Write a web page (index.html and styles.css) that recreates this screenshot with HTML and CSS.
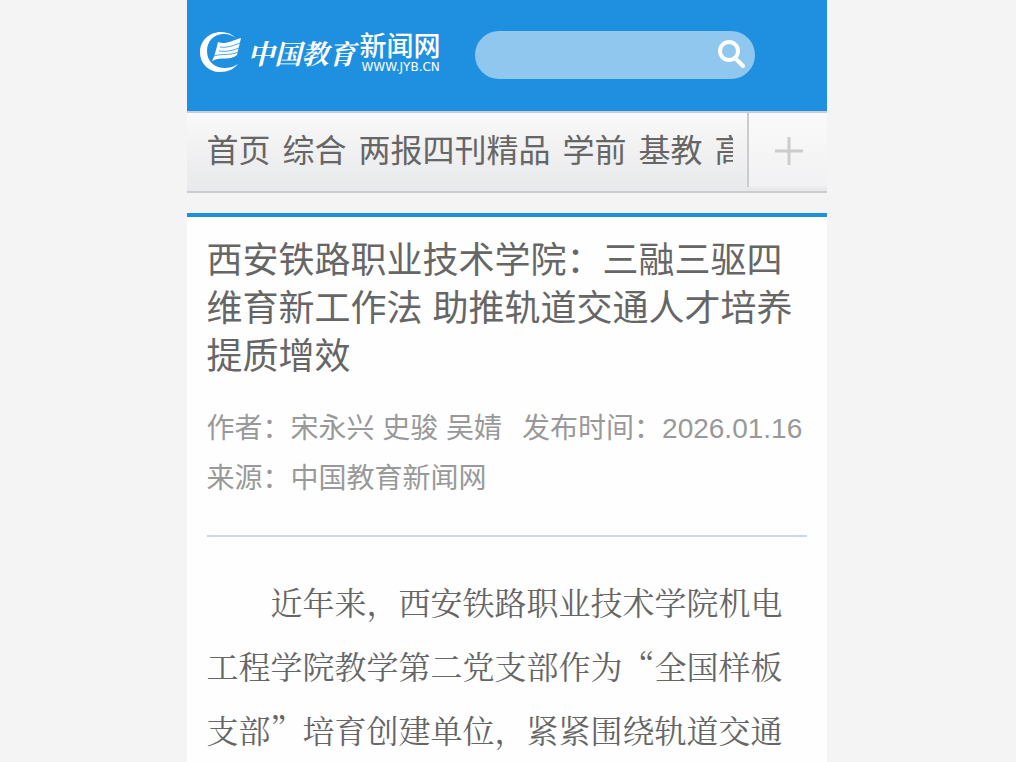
FILE: index.html
```html
<!DOCTYPE html>
<html lang="zh-CN">
<head>
  <meta charset="UTF-8">
  <meta name="viewport" content="width=device-width, initial-scale=1.0">
  <title>西安铁路职业技术学院：三融三驱四维育新工作法 助推轨道交通人才培养提质增效</title>
  <link rel="stylesheet" href="styles.css">
</head>
<body>
  <div class="wrap">
    <header class="header">
      <a class="logo" href="#">
        <svg class="logo-mark" viewBox="0 0 42 42" aria-hidden="true">
          <path d="M36 6C32 2 27 0 21 0C9 0 0 9 0 20C0 32 9 40 20 40C28 40 34 37 38 32C33 35 29 36 25 36C14 36 7 29 7 19C7 9 14 2 24 2C29 2 33 4 36 6Z"/>
          <path d="M18 10C25 13 31 9 41 6L37 23C30 29 22 24 12 29C15 23 16 18 18 10Z"/>
          <path class="logo-lines" d="M20 15C27 16 32 14 40 11M19 19C26 20 31 19 39 16M14 24C23 21 30 24 38 20"/>
        </svg>
        <span class="logo-brush">中国教育</span>
        <span class="logo-side">
          <span class="logo-name">新闻网</span>
          <span class="logo-url">WWW.JYB.CN</span>
        </span>
      </a>
      <form class="search">
        <input class="search-input" type="text" aria-label="搜索">
        <button class="search-btn" type="submit" aria-label="搜索">
          <svg viewBox="0 0 30 30" aria-hidden="true">
            <circle cx="12" cy="11" r="9"/>
            <path d="M18 18L26 26"/>
          </svg>
        </button>
      </form>
    </header>

    <nav class="nav">
      <div class="nav-list">
        <a href="#">首页</a>
        <a href="#">综合</a>
        <a href="#">两报四刊精品</a>
        <a href="#">学前</a>
        <a href="#">基教</a>
        <a href="#">高教</a>
      </div>
      <button class="nav-more" type="button" aria-label="更多">
        <svg viewBox="0 0 28 28" aria-hidden="true">
          <path d="M14 0V28M0 14H28"/>
        </svg>
      </button>
    </nav>

    <main class="article">
      <h1>西安铁路职业技术学院：三融三驱四维育新工作法 助推轨道交通人才培养提质增效</h1>
      <div class="meta">
        <span>作者：宋永兴 史骏 吴婧</span>
        <span>发布时间：2026.01.16</span>
        <span>来源：中国教育新闻网</span>
      </div>
      <div class="content">
        <p>近年来，西安铁路职业技术学院机电工程学院教学第二党支部作为“全国样板支部”培育创建单位，紧紧围绕轨道交通</p>
      </div>
    </main>
  </div>
</body>
</html>
```
FILE: styles.css
```css
* {
  box-sizing: border-box;
}

body {
  margin: 0;
  padding-right: 3px;
  background: #f4f4f4;
  color: #666;
  font-family: "Liberation Sans", "Noto Sans CJK SC", sans-serif;
}

a {
  color: inherit;
  text-decoration: none;
}

button {
  padding: 0;
  border: none;
  background: none;
  cursor: pointer;
}

.wrap {
  display: flex;
  flex-direction: column;
  max-width: 640px;
  min-height: 100vh;
  margin: 0 auto;
}

.header {
  display: flex;
  align-items: center;
  gap: 34px;
  padding: 26px 72px 32px 13px;
  background: #1f8fe0;
}

.logo {
  display: flex;
  align-items: center;
  flex: none;
  color: #fff;
}

.logo-mark {
  width: 42px;
  height: 42px;
  margin-right: 6px;
  fill: #fff;
}

.logo-lines {
  fill: none;
  stroke: #1f8fe0;
  stroke-width: 0.8;
}

.logo-brush {
  width: 112px;
  font-family: "Noto Serif CJK SC", "Noto Sans CJK SC", serif;
  font-size: 27px;
  font-style: italic;
  font-weight: bold;
  line-height: 42px;
  white-space: nowrap;
}

.logo-side {
  display: flex;
  flex-direction: column;
  width: 81px;
}

.logo-name {
  font-size: 27px;
  font-weight: 500;
  line-height: 28px;
}

.logo-url {
  padding-left: 2px;
  font-family: "DejaVu Sans", sans-serif;
  font-size: 12px;
  line-height: 12px;
}

.search {
  display: flex;
  align-items: center;
  flex: 1;
  min-width: 0;
  height: 48px;
  margin-top: 5px;
  padding-right: 8px;
  border-radius: 24px;
  background: #8fc7ef;
}

.search-input {
  flex: 1;
  min-width: 0;
  height: 48px;
  padding: 0 0 0 20px;
  border: none;
  outline: none;
  background: none;
  color: #fff;
  font-size: 24px;
}

.search-btn svg {
  display: block;
  width: 30px;
  height: 30px;
  fill: none;
  stroke: #fff;
  stroke-width: 4;
  stroke-linecap: round;
}

.nav {
  display: flex;
  align-items: flex-start;
  height: 82px;
  border-top: 2px solid #c8cdd3;
  border-bottom: 2px solid #ccc;
  background: linear-gradient(#fafafa, #f2f2f3 40%, #e8e9ec);
}

.nav-list {
  display: flex;
  flex: 1;
  gap: 12px;
  margin: 0 14px 0 20px;
  overflow: hidden;
  font-size: 32px;
  line-height: 76px;
  white-space: nowrap;
}

.nav-list a {
  flex: none;
}

.nav-more {
  display: flex;
  align-items: center;
  justify-content: center;
  flex: none;
  width: 80px;
  height: 74px;
  padding: 2px 0 0 2px;
  border-left: 2px solid #ccc;
  background: linear-gradient(#fafafa, #f1f1f3);
}

.nav-more svg {
  width: 28px;
  height: 28px;
  stroke: #ccc;
  stroke-width: 3;
}

.article {
  flex: 1;
  margin-top: 20px;
  padding: 20px 20px 0;
  border-top: 4px solid #1f8fe0;
  background: #fefefe;
}

h1 {
  margin: 0;
  font-size: 36px;
  font-weight: normal;
  line-height: 48px;
}

.meta {
  display: flex;
  flex-wrap: wrap;
  column-gap: 20px;
  margin-top: 23px;
  padding-bottom: 31px;
  border-bottom: 2px solid #cbd8ea;
  color: #999;
  font-size: 28px;
  line-height: 50px;
}

.content {
  padding-top: 32px;
  font-family: "Noto Serif CJK SC", serif;
  font-size: 32px;
  line-height: 64px;
}

.content p {
  margin: 0;
  text-indent: 2em;
}
```
